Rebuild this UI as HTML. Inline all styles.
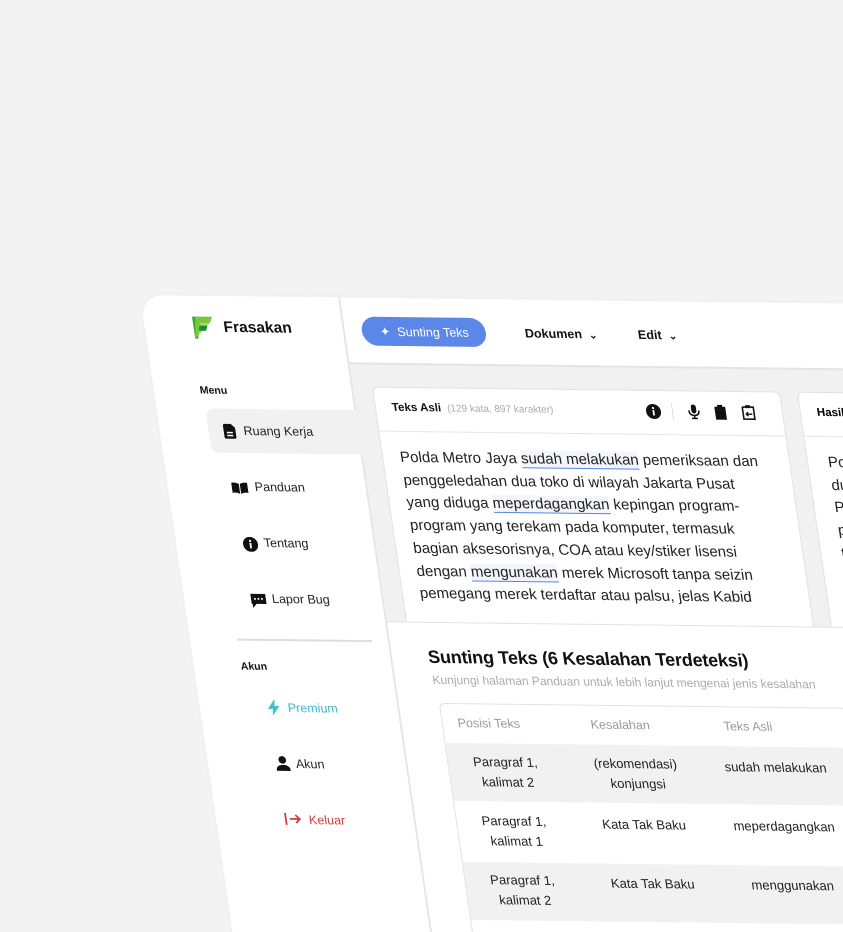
<!DOCTYPE html>
<html><head><meta charset="utf-8"><style>
*{box-sizing:border-box;margin:0;padding:0}
html,body{width:843px;height:932px;overflow:hidden}
body{background:#f3f3f3;font-family:"Liberation Sans",sans-serif}
#wrap{position:relative;width:843px;height:932px;overflow:hidden}
#app{position:absolute;left:140px;top:295px;width:1000px;height:640px;background:#fff;border-radius:22px 0 0 0;transform-origin:0 0;transform:matrix(1,0.012,0.145,1,0,0);box-shadow:0 0 4px rgba(0,0,0,.04);overflow:hidden}
.a{position:absolute;white-space:nowrap}
#side{position:absolute;left:0;top:0;width:200px;height:800px;border-right:2px solid #e6e6e6}
#main{position:absolute;left:200px;top:65px;right:0;bottom:0;background:#f1f1f1;border-top:2px solid #e4e4e4}
.mi{font-size:12.5px;color:#222}
.ic{position:absolute}
.card{position:absolute;background:#fff;border:1.5px solid #e2e2e2;border-radius:6px}
.body{font-size:15px;color:#222;line-height:22.7px;text-align:left;white-space:nowrap}
.u{border-bottom:1.5px solid #5b84e6;background:#f2f5fc}
.td{position:absolute;font-size:13px;color:#222;text-align:center;line-height:20px;width:110px}
</style></head><body><div id="wrap">
<div id="app">
 <div id="side">
  <svg class="ic" style="left:48px;top:20px" width="22" height="24" viewBox="0 0 22 24"><path d="M1 1h20l-3 6H8l-1 3h8l-2 5H6L4 23H1z" fill="#3aa53a"/><path d="M1 23L4 1h17l-3 6" fill="#8bcf3a" opacity=".8"/><path d="M6 15h7l2-5H7z" fill="#1e8a3a"/></svg>
  <div class="a" style="left:79px;top:23px;font-size:15.5px;font-weight:bold;color:#111">Frasakan</div>
  <div class="a" style="left:46px;top:89px;font-size:10.5px;font-weight:bold;color:#111">Menu</div>
  <div style="position:absolute;left:49px;top:113px;width:153px;height:44px;background:#f1f1f1;border-radius:8px 0 0 8px"></div>
  <svg class="ic" style="left:64px;top:128px" width="12" height="15" viewBox="0 0 12 15"><path d="M0 2a2 2 0 012-2h6l4 4v9a2 2 0 01-2 2H2a2 2 0 01-2-2z" fill="#111"/><rect x="3" y="8" width="6" height="1.5" fill="#fff"/><rect x="3" y="11" width="6" height="1.5" fill="#fff"/></svg>
  <div class="a mi" style="left:84px;top:128px">Ruang Kerja</div>
  <svg class="ic" style="left:64px;top:186px" width="16" height="12" viewBox="0 0 16 12"><path d="M0 1q4-1 7.5 1v10Q4 10 0 11zM16 1q-4-1-7.5 1v10q3.5-2 7.5-1z" fill="#111"/></svg>
  <div class="a mi" style="left:87px;top:184px">Panduan</div>
  <svg class="ic" style="left:67px;top:241px" width="15" height="15" viewBox="0 0 15 15"><circle cx="7.5" cy="7.5" r="7.5" fill="#111"/><rect x="6.6" y="6" width="1.8" height="5.5" fill="#fff"/><circle cx="7.5" cy="4" r="1.1" fill="#fff"/></svg>
  <div class="a mi" style="left:88px;top:240px">Tentang</div>
  <svg class="ic" style="left:67px;top:297px" width="15" height="15" viewBox="0 0 15 15"><path d="M0 1h15v10H5l-4 4v-4H0z" fill="#111"/><circle cx="4" cy="6" r="1" fill="#fff"/><circle cx="7.5" cy="6" r="1" fill="#fff"/><circle cx="11" cy="6" r="1" fill="#fff"/></svg>
  <div class="a mi" style="left:88px;top:296px">Lapor Bug</div>
  <div style="position:absolute;left:47px;top:343px;width:135px;height:1.5px;background:#ddd"></div>
  <div class="a" style="left:47px;top:365px;font-size:10.5px;font-weight:bold;color:#111">Akun</div>
  <svg class="ic" style="left:68px;top:403px" width="12" height="17" viewBox="0 0 12 17"><path d="M8 0L0 10h5l-1 7 8-10H7z" fill="#3fc1d0"/></svg>
  <div class="a mi" style="left:88px;top:405px;color:#3fb8c8">Premium</div>
  <svg class="ic" style="left:68px;top:460px" width="14" height="15" viewBox="0 0 14 15"><circle cx="7" cy="4" r="3.8" fill="#111"/><path d="M0 15q0-6 7-6t7 6z" fill="#111"/></svg>
  <div class="a mi" style="left:88px;top:461px">Akun</div>
  <svg class="ic" style="left:68px;top:516px" width="18" height="14" viewBox="0 0 18 14"><path d="M2 1v12M6 7h10M12 3l4 4-4 4" stroke="#d23c3c" stroke-width="1.8" fill="none"/></svg>
  <div class="a mi" style="left:93px;top:517px;color:#d23c3c">Keluar</div>
 </div>
 <div style="position:absolute;left:217px;top:19px;width:124px;height:29px;border-radius:15px;background:#5b88e8"></div>
 <div class="a" style="left:235px;top:26px;font-size:12.5px;color:#fff">✦&nbsp; Sunting Teks</div>
 <div class="a" style="left:380px;top:27px;font-size:12.5px;font-weight:bold;color:#111">Dokumen&nbsp; <span style="font-size:10px">⌄</span></div>
 <div class="a" style="left:493px;top:27px;font-size:12.5px;font-weight:bold;color:#111">Edit&nbsp; <span style="font-size:10px">⌄</span></div>
 <div id="main">
  <div class="card" style="left:19px;top:22px;width:408px;height:300px">
   <div style="height:44px;border-bottom:1.5px solid #e6e6e6;position:relative">
    <div class="a" style="left:16px;top:14px;font-size:11.5px;font-weight:bold;color:#111">Teks Asli <span style="font-weight:normal;color:#aaa;font-size:10px">&nbsp;(129 kata, 897 karakter)</span></div>
    <svg class="ic" style="left:270px;top:13px" width="15" height="15" viewBox="0 0 15 15"><circle cx="7.5" cy="7.5" r="7.5" fill="#111"/><rect x="6.6" y="6" width="1.8" height="5.5" fill="#fff"/><circle cx="7.5" cy="4" r="1.1" fill="#fff"/></svg>
    <div style="position:absolute;left:296px;top:12px;width:1px;height:17px;background:#ddd"></div>
    <svg class="ic" style="left:312px;top:13px" width="12" height="15" viewBox="0 0 12 15"><rect x="3.5" y="0" width="5" height="9" rx="2.5" fill="#111"/><path d="M1 6q0 5 5 5t5-5M6 11v3M3 14h6" stroke="#111" stroke-width="1.5" fill="none"/></svg>
    <svg class="ic" style="left:339px;top:13px" width="11" height="15" viewBox="0 0 11 15"><path d="M0 2h3V0h5v2h3v13H0z" fill="#111"/></svg>
    <svg class="ic" style="left:366px;top:13px" width="13" height="15" viewBox="0 0 13 15"><path d="M1 2h3M9 2h3v12H1V2" stroke="#111" stroke-width="1.6" fill="none"/><rect x="4" y="0" width="5" height="3" fill="#111"/><path d="M10 9H4M6 7L4 9l2 2" stroke="#111" stroke-width="1.4" fill="none"/></svg>
   </div>
   <div class="body" style="padding:15px 10px 0 17px">
    <div>Polda Metro Jaya <span class="u">sudah melakukan</span> pemeriksaan dan</div>
    <div>penggeledahan dua toko di wilayah Jakarta Pusat</div>
    <div>yang diduga <span class="u">meperdagangkan</span> kepingan program-</div>
    <div>program yang terekam pada komputer, termasuk</div>
    <div>bagian aksesorisnya, COA atau key/stiker lisensi</div>
    <div>dengan <span class="u">mengunakan</span> merek Microsoft tanpa seizin</div>
    <div>pemegang merek terdaftar atau palsu, jelas Kabid</div>
   </div>
  </div>
  <div class="card" style="left:444px;top:22px;width:400px;height:300px">
   <div style="height:44px;border-bottom:1.5px solid #e6e6e6;position:relative"><div class="a" style="left:16px;top:14px;font-size:11.5px;font-weight:bold">Hasil</div></div>
   <div class="body" style="padding-top:15px;padding-left:20px"><div>Polda</div><div>dua</div><div>Pusat</div><div>pr</div><div>te</div></div>
  </div>
  <div style="position:absolute;left:0;top:257px;right:0;height:500px;background:#fff;border-top:1.5px solid #e2e2e2">
   <div class="a" style="left:36px;top:24px;font-size:18px;font-weight:bold;color:#111;letter-spacing:-.2px">Sunting Teks (6 Kesalahan Terdeteksi)</div>
   <div class="a" style="left:37px;top:50px;font-size:12px;color:#aaa">Kunjungi halaman Panduan untuk lebih lanjut mengenai jenis kesalahan</div>
   <div style="position:absolute;left:40px;top:80px;width:800px;height:400px;border:1.5px solid #e2e2e2;border-radius:6px">
    <div class="a" style="left:15px;top:12px;font-size:12.5px;color:#999">Posisi Teks</div>
    <div class="a" style="left:148px;top:12px;font-size:12.5px;color:#999">Kesalahan</div>
    <div class="a" style="left:281px;top:12px;font-size:12.5px;color:#999">Teks Asli</div>
    <div style="position:absolute;left:0;right:0;top:39px;height:58px;background:#f1f1f1"></div>
    <div style="position:absolute;left:0;right:0;top:158px;height:58px;background:#f1f1f1"></div>
    <div class="td" style="left:2px;top:48px">Paragraf 1,<br>kalimat 2</div>
    <div class="td" style="left:132px;top:48px">(rekomendasi)<br>konjungsi</div>
    <div class="td" style="left:262px;top:50px;width:130px">sudah melakukan</div>
    <div class="td" style="left:2px;top:107px">Paragraf 1,<br>kalimat 1</div>
    <div class="td" style="left:132px;top:109px">Kata Tak Baku</div>
    <div class="td" style="left:262px;top:109px;width:130px">meperdagangkan</div>
    <div class="td" style="left:2px;top:166px">Paragraf 1,<br>kalimat 2</div>
    <div class="td" style="left:132px;top:168px">Kata Tak Baku</div>
    <div class="td" style="left:262px;top:168px;width:130px">menggunakan</div>
   </div>
  </div>
 </div>
</div>
</div></body></html>
